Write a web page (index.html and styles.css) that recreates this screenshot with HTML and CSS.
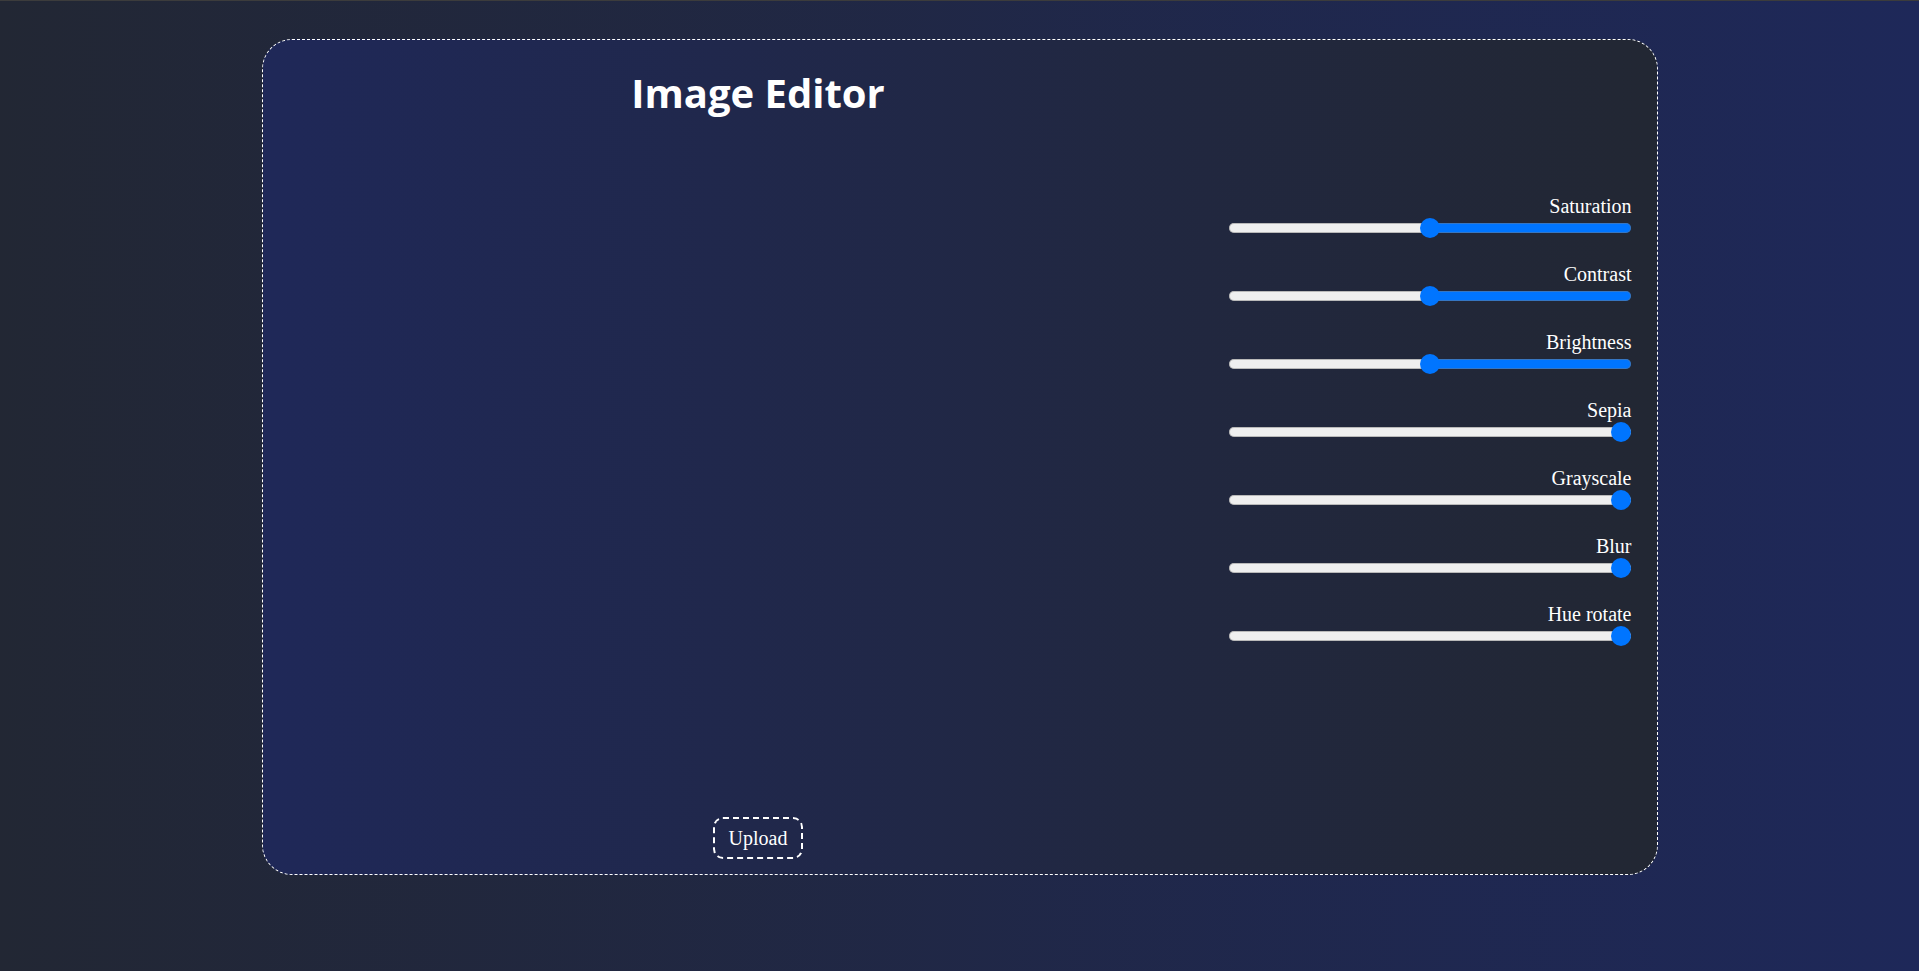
FILE: index.html
```html
<!DOCTYPE html>
<html lang="en">
<head>
<meta charset="utf-8">
<title>Image Editor</title>
<link rel="stylesheet" href="styles.css">
</head>
<body>
<main class="editor">
  <section class="preview">
    <h1 class="title">Image Editor</h1>
    <label class="upload">Upload</label>
  </section>
  <section class="controls">
    <div class="control">
      <label class="control-label">Saturation</label>
      <input class="slider" type="range" min="0" max="200" value="100">
    </div>
    <div class="control">
      <label class="control-label">Contrast</label>
      <input class="slider" type="range" min="0" max="200" value="100">
    </div>
    <div class="control">
      <label class="control-label">Brightness</label>
      <input class="slider" type="range" min="0" max="200" value="100">
    </div>
    <div class="control">
      <label class="control-label">Sepia</label>
      <input class="slider slider-empty" type="range" min="0" max="100" value="0">
    </div>
    <div class="control">
      <label class="control-label">Grayscale</label>
      <input class="slider slider-empty" type="range" min="0" max="100" value="0">
    </div>
    <div class="control">
      <label class="control-label">Blur</label>
      <input class="slider slider-empty" type="range" min="0" max="10" value="0">
    </div>
    <div class="control">
      <label class="control-label">Hue rotate</label>
      <input class="slider slider-empty" type="range" min="0" max="360" value="0">
    </div>
  </section>
</main>
</body>
</html>
```
FILE: styles.css
```css
* {
  box-sizing: border-box;
}

html, body {
  margin: 0;
  padding: 0;
}

body {
  min-height: 100vh;
  border-top: 1px solid #3c3c3c;
  background: linear-gradient(to right, #222734, #1e2859);
  font-family: "Liberation Serif", "Times New Roman", serif;
  color: #ffffff;
  overflow: hidden;
}

.editor {
  width: 1396px;
  height: 836px;
  margin: 38px auto 0;
  border: 1px dashed #ffffff;
  border-radius: 30px;
  background: linear-gradient(to right, #1f2858, #222733);
  display: flex;
}

.preview {
  flex: 0 0 991px;
  display: flex;
  flex-direction: column;
  align-items: center;
  justify-content: space-between;
  padding: 26px 0 15px;
}

.title {
  margin: 0;
  font-family: "Open Sans", sans-serif;
  font-weight: 700;
  font-size: 40px;
  line-height: 54px;
  color: #ffffff;
}

.upload {
  display: block;
  padding: 8px 14px 7px;
  border: 2px dashed #ffffff;
  border-radius: 10px;
  font-size: 20px;
  line-height: 23px;
  cursor: pointer;
}

.controls {
  flex: 1 1 auto;
  min-width: 0;
  display: flex;
  flex-direction: column;
  align-items: flex-end;
  gap: 30px;
  padding: 155px 25px 0 0;
}

.control {
  display: flex;
  flex-direction: column;
  align-items: flex-end;
  gap: 5px;
  flex-shrink: 0;
}

.control-label {
  font-size: 20px;
  line-height: 23px;
}

.slider {
  -webkit-appearance: none;
  appearance: none;
  direction: rtl;
  display: block;
  flex-shrink: 0;
  width: 402px;
  height: 10px;
  margin: 0 1px 0 0;
  padding: 0;
  border-radius: 5px;
  background: linear-gradient(to left, #0075ff 0 50%, #efefef 50% 100%);
  box-shadow: inset 0 0 0 1px rgba(120, 120, 120, 0.45);
}

.slider-empty {
  background: #efefef;
}

.slider::-webkit-slider-runnable-track {
  height: 10px;
  background: transparent;
  border: none;
}

.slider::-webkit-slider-thumb {
  -webkit-appearance: none;
  appearance: none;
  width: 20px;
  height: 20px;
  margin-top: -5px;
  border: none;
  border-radius: 50%;
  background: #0075ff;
}
```
